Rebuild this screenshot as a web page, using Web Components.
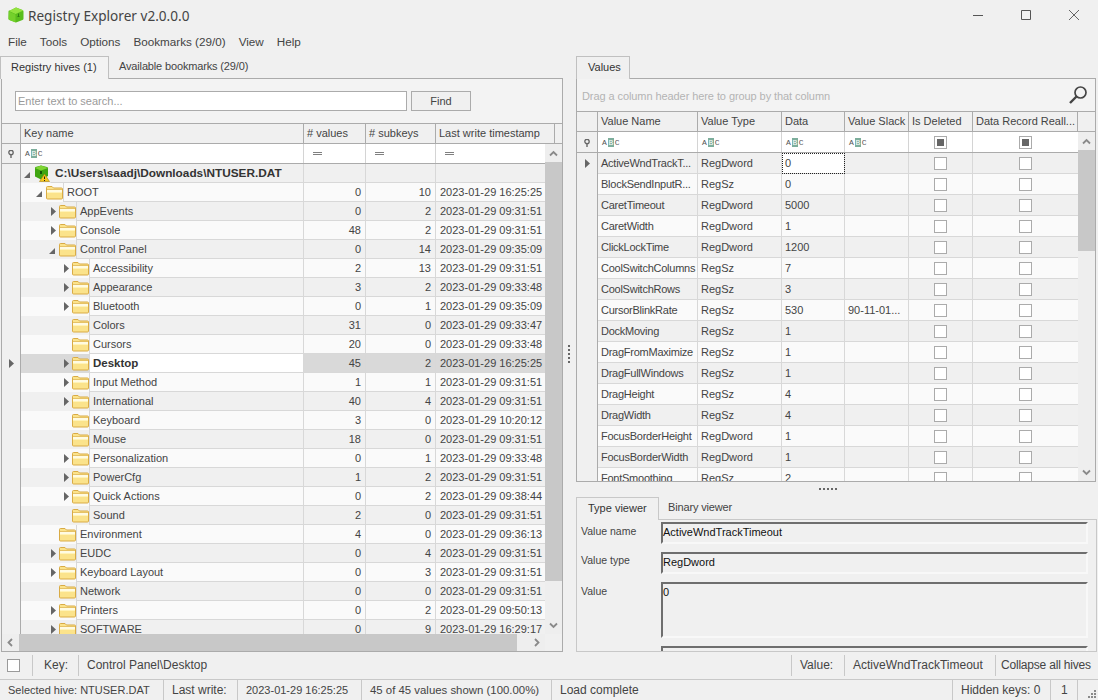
<!DOCTYPE html>
<html>
<head>
<meta charset="utf-8">
<title>Registry Explorer v2.0.0.0</title>
<style>
	html, body { margin: 0; padding: 0; background: #f0f0f0; }
	body { font: 11px/1 "Liberation Sans", sans-serif; color: #444; overflow: hidden; }
</style>
</head>
<body>
<reg-app></reg-app>
<script>
const FOLDER = `<svg width="17" height="15" viewBox="0 0 17 15"><path d="M.5 13V2.500q0-1 1-1h4.500l1.500 1.500h8q1 0 1 1V13q0 1-1 1h-14q-1 0-1-1z" fill="#fbe38b" stroke="#d9ab45"/><path d="M1 4.500h15" stroke="#e6c266"/><path d="M1 5.500h15M1 6.500h15" stroke="#fffbe2"/><path d="M1 7.500h15" stroke="#fff3b8"/></svg>`;
const ARROW_R = `<svg width="5" height="9" viewBox="0 0 5 9"><path d="M0 0l5 4.500-5 4.500z" fill="#666"/></svg>`;
const ARROW_D = `<svg width="6" height="6" viewBox="0 0 6 6"><path d="M6 0v6H0z" fill="#666"/></svg>`;
const PIN = `<svg width="6" height="8" viewBox="0 0 6 8"><circle cx="3" cy="2.500" r="2.200" fill="none" stroke="#666" stroke-width="1.300"/><path d="M3 4v4" stroke="#666" stroke-width="1.400"/></svg>`;
const CUBE = `<svg width="16" height="16" viewBox="0 0 16 16"><path d="M2 3.500L8 .5l6.500 2.500q1 .5 1 1.500v7q0 1-1 1.500L8 15.500 1.500 13q-1-.5-1-1.500v-7q0-.6.5-1z" fill="#59bd1c"/><path d="M1 4l6.500 3 8-3.500L8 .5z" fill="#93e23f"/><path d="M1 4.500l6.500 3V15.500L1.500 13q-1-.5-1-1.500z" fill="#74d02b"/><path d="M10.500 6.500v3M9.500 9.500h2" stroke="#2f7f10"/></svg>`;
const HIVE = `<svg width="16" height="17" viewBox="0 0 16 17"><path d="M1.500 2L7 .5 13 2q1 .3 1 1.300V11l-7 3.500-6-3V3q0-.7.5-1z" fill="#3fa512"/><path d="M1 3l6 2.500L14 3 7 .5z" fill="#7fd433"/><path d="M6 6v3h2V6z" fill="#14540a"/><path d="M10.500 9l5 7.500h-10z" fill="#f7c81e" stroke="#a8820e" stroke-width=".6"/><path d="M10.500 11.500v2.500M10.500 15v1" stroke="#222"/></svg>`;

const ABC = `<style>
	.abc { display: inline-flex; align-items: center; height: 9px; font: 8px/9px "Liberation Mono", monospace; color: #555; gap: 0; }
	.abc b { font-weight: normal; background: #7dae9c; color: #fff; width: 6px; margin: 0 1px; text-align: center; }
</style><span class="abc">A<b>B</b>C</span>`;

class RegTabs extends HTMLElement {
	constructor(){
		super();
		this.attachShadow({mode:"open"});
	}
	connectedCallback(){
		const tabs = this.getAttribute("tabs").split("|");
		const w = this.getAttribute("active-width");
		this.shadowRoot.innerHTML = `
			<style>
				:host { display: flex; flex-direction: column; min-height: 0; }
				.strip { display: flex; height: 23px; flex: none; margin-bottom: -1px; position: relative; z-index: 1; }
				.tab { height: 23px; box-sizing: border-box; line-height: 21px; color: #444; }
				.tab.on {
					width: ${w}px;
					padding-left: ${this.getAttribute("tab-pad")||10}px;
					background: var(--tab-bg, #f0f0f0);
					border: 1px solid var(--tab-line, #c0c0c0);
					border-bottom: none;
					color: #333;
				}
				.tab.off { margin-left: ${this.getAttribute("off-gap")||10}px; letter-spacing: -.15px; }
				.body { flex: 1; min-height: 0; display: flex; flex-direction: column; overflow: hidden; box-sizing: border-box; border: 1px solid var(--panel-line, #ababab); margin-left: var(--panel-left, 0); }
			</style>
			<div class="strip">${tabs.map((t,i)=>`<div class="tab ${i?"off":"on"}">${t}</div>`).join("")}</div>
			<div class="body"><slot></slot></div>
		`;
	}
}

class ScrollBar extends HTMLElement {
	constructor(){
		super();
		this.attachShadow({mode:"open"});
	}
	connectedCallback(){
		const v = this.getAttribute("dir")=="v";
		const chev = (d)=>`<svg width="9" height="9" viewBox="0 0 9 9"><path d="${d}" fill="none" stroke="#8a8a8a" stroke-width="1.800"/></svg>`;
		const a = v?chev("M1 6.500l3.500-3.500 3.500 3.500"):chev("M6 1L2.500 4.500 6 8");
		const b = v?chev("M1 2.500l3.500 3.500 3.500-3.500"):chev("M3 1l3.500 3.500L3 8");
		const size = this.getAttribute("thumb");
		const end = this.getAttribute("end")||17;
		this.shadowRoot.innerHTML = `
			<style>
				:host { display: flex; flex: none; background: #eeeeee; ${v?"flex-direction: column; width: 17px;":"flex-direction: row; height: 17px;"} }
				.btn { display: flex; align-items: center; justify-content: center; flex: none; ${v?"height: 18px;":"width: 17px;"} }
				.btn.end { ${v?`height: ${end}px;`:`width: ${end}px;`} }
				.thumb { flex: none; background: #c8c8c8; ${v?`height: ${size}px;`:`width: ${size}px;`} }
				.rest { flex: 1; }
			</style>
			<div class="btn">${a}</div><div class="thumb"></div><div class="rest"></div><div class="btn end">${b}</div>
		`;
	}
}

class GridHead extends HTMLElement {
	constructor(){
		super();
		this.attachShadow({mode:"open"});
	}
	connectedCallback(){
		const cols = this.getAttribute("cols");
		const names = this.getAttribute("names").split("|");
		this.shadowRoot.innerHTML = `
			<style>
				:host { display: grid; grid-template-columns: ${cols}; height: ${this.getAttribute("h")}px; box-sizing: border-box; background: #f0f0f0; border-top: ${this.getAttribute("top")||0}px solid #ababab; border-bottom: 1px solid #ababab; flex: none; }
				div { border-right: 1px solid #ababab; padding-left: 3px; line-height: 19px; white-space: nowrap; overflow: hidden; color: #444; }
				div:last-child { border-right: none; }
			</style>
			<div></div>${names.map(n=>`<div>${n}</div>`).join("")}
		`;
	}
}

class FilterRow extends HTMLElement {
	constructor(){
		super();
		this.attachShadow({mode:"open"});
	}
	connectedCallback(){
		const cols = this.getAttribute("cols");
		const kinds = this.getAttribute("kinds").split(" ");
		const cell = (k)=>{
			if (k=="abc") return `<div class="c">${ABC}</div>`;
			if (k=="eq") return `<div class="c"><i class="eq"></i></div>`;
			return `<div class="c mid"><span class="chk"><u></u></span></div>`;
		};
		this.shadowRoot.innerHTML = `
			<style>
				:host { display: grid; grid-template-columns: ${cols}; height: ${this.getAttribute("h")}px; flex: none; box-sizing: border-box; background: #fff; border-bottom: 1px solid #ababab; }
				.ind { background: #f0f0f0; border-right: 1px solid #ababab; display: flex; align-items: center; justify-content: center; padding-top: 1px; }
				.c { border-right: 1px solid #d4d4d4; display: flex; align-items: center; padding-left: 4px; }
				.c:last-child { border-right: none; }
				.c.mid { justify-content: center; padding-left: 0; }
				.eq { display: block; width: 9px; height: 1px; border-top: 1px solid #808080; border-bottom: 1px solid #808080; margin-left: 5px; }
				.chk { box-sizing: border-box; width: 13px; height: 13px; border: 1px solid #ababab; background: #fff; display: flex; align-items: center; justify-content: center; }
				.chk u { display: block; width: 7px; height: 7px; background: #666; }
			</style>
			<div class="ind">${PIN}</div>${kinds.map(cell).join("")}
		`;
	}
}

const KEY_COLS = "19px 283px 62px 70px 1fr";

class KeyRow extends HTMLElement {
	constructor(){
		super();
		this.attachShadow({mode:"open"});
	}
	connectedCallback(){
		const a = (n)=>this.getAttribute(n)||"";
		const level = +a("level");
		const exp = a("exp");
		const sel = this.hasAttribute("sel");
		const hive = level==0;
		const ind = hive?29:42+13*(level-1);
		const marker = exp=="d"?ARROW_D:exp=="r"?ARROW_R:"";
		this.shadowRoot.innerHTML = `
			<style>
				:host { display: grid; grid-template-columns: ${KEY_COLS}; height: 19px; flex: none; line-height: 18px; color: #444; background: ${a("alt")?"#fafafa":"#f0f0f0"}; }
				.ind { background: #f0f0f0; border-right: 1px solid #ababab; display: flex; align-items: center; justify-content: center; padding-left: 1px; }
				.key { display: flex; min-width: 0; }
				.tree { flex: none; box-sizing: border-box; width: ${ind}px; display: flex; justify-content: flex-end; align-items: center; ${sel?"background: #d9d9d9;":""} }
				.exp { width: ${exp=="d"?10:9}px; display: flex; align-items: center; padding-left: ${exp=="d"?0:1}px; box-sizing: border-box; margin-top: ${exp=="d"?2:0}px; }
				.exp svg, .icon svg { display: block; }
				.icon { width: ${hive?16:17}px; height: ${hive?17:15}px; }
				.name { flex: 1; min-width: 0; box-sizing: border-box; padding-left: ${hive?4:3}px; white-space: nowrap; overflow: hidden; border-left: 1px solid ${hive?"transparent":"#d8d8d8"}; border-bottom: 1px solid #d8d8d8; border-right: 1px solid #d8d8d8; ${sel?"background: #fff;":""} ${sel?"font-weight: 700; font-size: 11.500px; color: #333;":""} ${hive?"font-weight: 700; font-size: 11.800px; color: #333;":""} }
				.num, .time { box-sizing: border-box; border-bottom: 1px solid #d8d8d8; ${sel?"background: #d9d9d9;":""} }
				.num { text-align: right; padding-right: 4px; border-right: 1px solid #d8d8d8; }
				.time { padding-left: 4px; white-space: nowrap; overflow: hidden; }
			</style>
			<div class="ind">${sel?ARROW_R:""}</div>
			<div class="key">
				<div class="tree"><span class="exp">${marker}</span><span class="icon">${hive?HIVE:FOLDER}</span></div>
				<div class="name">${a("name")}</div>
			</div>
			<div class="num">${a("values")}</div>
			<div class="num">${a("subkeys")}</div>
			<div class="time">${a("time")}</div>
		`;
	}
}

const HIVES = [
	[1,"d","ROOT",0,10,"16:25:25"],
	[2,"r","AppEvents",0,2,"09:31:51"],
	[2,"r","Console",48,2,"09:31:51"],
	[2,"d","Control Panel",0,14,"09:35:09"],
	[3,"r","Accessibility",2,13,"09:31:51"],
	[3,"r","Appearance",3,2,"09:33:48"],
	[3,"r","Bluetooth",0,1,"09:35:09"],
	[3,"","Colors",31,0,"09:33:47"],
	[3,"","Cursors",20,0,"09:33:48"],
	[3,"r","Desktop",45,2,"16:25:25"],
	[3,"r","Input Method",1,1,"09:31:51"],
	[3,"r","International",40,4,"09:31:51"],
	[3,"","Keyboard",3,0,"10:20:12"],
	[3,"","Mouse",18,0,"09:31:51"],
	[3,"r","Personalization",0,1,"09:33:48"],
	[3,"r","PowerCfg",1,2,"09:31:51"],
	[3,"r","Quick Actions",0,2,"09:38:44"],
	[3,"","Sound",2,0,"09:31:51"],
	[2,"","Environment",4,0,"09:36:13"],
	[2,"r","EUDC",0,4,"09:31:51"],
	[2,"r","Keyboard Layout",0,3,"09:31:51"],
	[2,"","Network",0,0,"09:31:51"],
	[2,"r","Printers",0,2,"09:50:13"],
	[2,"r","SOFTWARE",0,9,"16:29:17"],
];

class HivePanel extends HTMLElement {
	constructor(){
		super();
		this.attachShadow({mode:"open"});
		const rows = HIVES.map((r,i)=>`<key-row level="${r[0]}" exp="${r[1]}" name="${r[2]}" values="${r[3]}" subkeys="${r[4]}" time="2023-01-29 ${r[5]}" ${i%2==0?'alt="1"':""} ${r[2]=="Desktop"?"sel":""}></key-row>`).join("");
		this.shadowRoot.innerHTML = `
			<style>
				:host { display: flex; flex-direction: column; flex: 1; min-height: 0; background: #f3f3f3; }
				.search { display: flex; gap: 4px; padding: 12px 0 0 13px; height: 32px; flex: none; }
				.input { box-sizing: border-box; width: 392px; height: 20px; background: #fff; border: 1px solid #ababab; padding-left: 2px; line-height: 18px; color: #9a9a9a; }
				.find { box-sizing: border-box; width: 60px; height: 20px; background: #f0f0f0; border: 1px solid #ababab; text-align: center; line-height: 18px; color: #444; }
				.mid { display: flex; flex: 1; min-height: 0; }
				.cells { flex: 1; min-width: 0; display: flex; flex-direction: column; overflow: hidden; }
				.bottom { display: flex; flex: none; height: 17px; background: #f0f0f0; }
				.bottom scroll-bar { flex: 1; }
				.corner { width: 17px; }
			</style>
			<div class="search"><div class="input">Enter text to search...</div><div class="find">Find</div></div>
			<grid-head h="21" top="1" cols="19px 283px 62px 70px 119px 1fr" names="Key name|# values|# subkeys|Last write timestamp|"></grid-head>
			<div class="mid">
				<div class="cells">
					<filter-row h="20" cols="${KEY_COLS}" kinds="abc eq eq eq"></filter-row>
					<key-row level="0" exp="d" name="C:\\Users\\saadj\\Downloads\\NTUSER.DAT"></key-row>
					${rows}
				</div>
				<scroll-bar dir="v" thumb="419"></scroll-bar>
			</div>
			<div class="bottom"><scroll-bar dir="h" thumb="498"></scroll-bar><div class="corner"></div></div>
		`;
	}
}

const VAL_COLS = "21px 100px 84px 63px 64px 64px 1fr";

class ValueRow extends HTMLElement {
	constructor(){
		super();
		this.attachShadow({mode:"open"});
	}
	connectedCallback(){
		const a = (n)=>this.getAttribute(n)||"";
		const first = this.hasAttribute("first");
		this.shadowRoot.innerHTML = `
			<style>
				:host { display: grid; grid-template-columns: ${VAL_COLS}; height: 21px; flex: none; line-height: 20px; color: #444; background: ${a("alt")?"#fafafa":"#f0f0f0"}; }
				.ind { background: #f0f0f0; border-right: 1px solid #ababab; display: flex; align-items: center; justify-content: center; }
				.c { box-sizing: border-box; border-right: 1px solid #d8d8d8; border-bottom: 1px solid #d8d8d8; padding-left: 3px; white-space: nowrap; overflow: hidden; }
				.c:last-child { border-right: none; }
				.vn { letter-spacing: -.25px; }
				.focus { background: #fff; outline: 1px dotted #222; outline-offset: -1px; }
				.mid { padding: 0; display: flex; align-items: center; justify-content: center; }
				.chk { box-sizing: border-box; width: 13px; height: 13px; border: 1px solid #ababab; background: #fff; }
			</style>
			<div class="ind">${first?ARROW_R:""}</div>
			<div class="c vn">${a("name")}</div>
			<div class="c">${a("type")}</div>
			<div class="c ${first?"focus":""}">${a("data")}</div>
			<div class="c">${a("slack")}</div>
			<div class="c mid"><span class="chk"></span></div>
			<div class="c mid"><span class="chk"></span></div>
		`;
	}
}

const VALUES = [
	["ActiveWndTrackT...","RegDword","0",""],
	["BlockSendInputR...","RegSz","0",""],
	["CaretTimeout","RegDword","5000",""],
	["CaretWidth","RegDword","1",""],
	["ClickLockTime","RegDword","1200",""],
	["CoolSwitchColumns","RegSz","7",""],
	["CoolSwitchRows","RegSz","3",""],
	["CursorBlinkRate","RegSz","530","90-11-01..."],
	["DockMoving","RegSz","1",""],
	["DragFromMaximize","RegSz","1",""],
	["DragFullWindows","RegSz","1",""],
	["DragHeight","RegSz","4",""],
	["DragWidth","RegSz","4",""],
	["FocusBorderHeight","RegDword","1",""],
	["FocusBorderWidth","RegDword","1",""],
	["FontSmoothing","RegSz","2",""],
];

class ValuesPanel extends HTMLElement {
	constructor(){
		super();
		this.attachShadow({mode:"open"});
		const rows = VALUES.map((r,i)=>`<value-row name="${r[0]}" type="${r[1]}" data="${r[2]}" slack="${r[3]}" ${i%2?'alt="1"':""} ${i==0?"first":""}></value-row>`).join("");
		this.shadowRoot.innerHTML = `
			<style>
				:host { display: flex; flex-direction: column; flex: 1; min-height: 0; background: #f3f3f3; }
				.group { display: flex; align-items: center; justify-content: space-between; flex: none; height: 33px; box-sizing: border-box; padding: 3px 7px 0 5px; border-bottom: 1px solid #ababab; color: #b4b4b4; }
				.group span { letter-spacing: -.08px; }
				.group svg { display: block; margin-top: -4px; }
				.mid { display: flex; flex: 1; min-height: 0; }
				.cells { flex: 1; min-width: 0; display: flex; flex-direction: column; overflow: hidden; }
			</style>
			<div class="group"><span>Drag a column header here to group by that column</span>
				<svg width="20" height="20" viewBox="0 0 20 20"><circle cx="12.500" cy="7.500" r="5.500" fill="none" stroke="#444" stroke-width="1.700"/><path d="M8.500 11.500L2 18" stroke="#444" stroke-width="2.400"/></svg>
			</div>
			<grid-head h="20" cols="21px 100px 84px 63px 64px 64px 105px 1fr" names="Value Name|Value Type|Data|Value Slack|Is Deleted|Data Record Reall...|"></grid-head>
			<div class="mid">
				<div class="cells">
					<filter-row h="21" cols="${VAL_COLS}" kinds="abc abc abc abc chk chk"></filter-row>
					${rows}
				</div>
				<scroll-bar dir="v" thumb="101"></scroll-bar>
			</div>
		`;
	}
}

class FieldBox extends HTMLElement {
	constructor(){
		super();
		this.attachShadow({mode:"open"});
	}
	connectedCallback(){
		this.shadowRoot.innerHTML = `
			<style>
				:host { display: grid; grid-template-columns: 84px 427px; flex: none; height: ${this.getAttribute("h")}px; }
				.label { padding: ${this.getAttribute("pad")||3}px 0 0 4px; color: #444; line-height: 13px; font-size: 10.500px; }
				.box { box-sizing: border-box; background: #f0f0f0; border: 2px solid; border-color: #6e6e6e #f8f8f8 #f8f8f8 #6e6e6e; padding: 1px 0 0 0; color: #111; line-height: 14px; }
			</style>
			<div class="label">${this.getAttribute("label")||""}</div>
			<div class="box"><slot></slot></div>
		`;
	}
}

class ViewerPanel extends HTMLElement {
	constructor(){
		super();
		this.attachShadow({mode:"open"});
		this.shadowRoot.innerHTML = `
			<style>
				:host { display: flex; flex-direction: column; gap: 8px; flex: 1; min-height: 0; padding-top: 2px; background: #f0f0f0; }
			</style>
			<field-box h="22" label="Value name" pad="3">ActiveWndTrackTimeout</field-box>
			<field-box h="22" label="Value type" pad="2">RegDword</field-box>
			<field-box h="56" label="Value" pad="3">0</field-box>
			<field-box h="22"></field-box>
		`;
	}
}

class BarCells extends HTMLElement {
	constructor(){
		super();
		this.attachShadow({mode:"open"});
	}
	connectedCallback(){
		this.shadowRoot.innerHTML = `
			<style>
				:host { display: flex; flex: none; height: 20px; background: #f0f0f0; line-height: 20px; font-size: 12px; color: #444; }
				::slotted(span) { box-sizing: border-box; padding-left: 8px; white-space: nowrap; border-right: 1px solid #c8c8c8; }
				::slotted(span.grow) { flex: 1; }
				::slotted(span.small) { font-size: 11px; }
				::slotted(span.mid) { font-size: 11.400px; }
			</style>
			<slot></slot>
		`;
	}
}

class RegApp extends HTMLElement {
	constructor(){
		super();
		this.attachShadow({mode:"open"});
		const dots = (n,c)=>`<span class="dots ${c}">${"<i></i>".repeat(n)}</span>`;
		const sep = `<b class="sep"></b>`;
		this.shadowRoot.innerHTML = `
			<style>
				:host { display: flex; flex-direction: column; width: 1098px; height: 700px; background: #f0f0f0; overflow: hidden; }
				.title { display: flex; align-items: center; height: 30px; flex: none; padding-left: 8px; }
				.title svg { display: block; }
				.title .name { margin-left: 4px; font: 13.600px "Noto Sans", sans-serif; color: #444; flex: 1; margin-top: 1px; }
				.win { width: 48px; height: 30px; display: flex; align-items: center; justify-content: center; }
				.menu { display: flex; gap: 13px; height: 26px; flex: none; padding: 0 0 3px 8px; align-items: center; font-size: 11.700px; color: #444; box-sizing: border-box; }
				.main { display: flex; flex: none; height: 596px; }
				.left { width: 564px; flex: none; display: flex; flex-direction: column; }
				.left reg-tabs { flex: 1; --panel-left: 1px; margin-right: 1px; --tab-bg: #f3f3f3; }
				.vsplit { width: 12px; flex: none; display: flex; align-items: center; justify-content: center; padding-right: 2px; box-sizing: border-box; }
				.right { flex: 1; min-width: 0; display: flex; flex-direction: column; }
				.right .top { height: 426px; flex: none; margin-right: 2px; --tab-bg: #f0f0f0; }
				.hsplit { height: 15px; flex: none; display: flex; justify-content: center; padding: 6px 18px 0 0; box-sizing: border-box; }
				.right .low { flex: 1; min-height: 0; margin-right: 1px; --panel-line: #c8c8c8; --tab-line: #c8c8c8; }
				.dots { display: flex; gap: 2px; }
				.dots.v { flex-direction: column; }
				.dots i { display: block; width: 2px; height: 2px; background: #666; }
				.keybar { display: flex; align-items: center; height: 28px; flex: none; box-sizing: border-box; border-bottom: 1px solid #c8c8c8; font-size: 12px; color: #444; padding-bottom: 1px; }
				.check { box-sizing: border-box; width: 13px; height: 13px; background: #fff; border: 1px solid #9a9a9a; margin: 0 12px 0 7px; flex: none; }
				.sep { display: block; width: 1px; height: 21px; background: #c8c8c8; flex: none; }
				.t { box-sizing: border-box; padding-left: 8px; white-space: nowrap; flex: none; }
				.fill { flex: 1; }
			</style>
			<div class="title">${CUBE}<span class="name">Registry Explorer v2.0.0.0</span>
				<span class="win"><svg width="10" height="10" viewBox="0 0 10 10"><path d="M0 5.500h10" stroke="#555"/></svg></span>
				<span class="win"><svg width="10" height="10" viewBox="0 0 10 10"><path d="M.5.500h9v9h-9z" fill="none" stroke="#555"/></svg></span>
				<span class="win"><svg width="10" height="10" viewBox="0 0 10 10"><path d="M0 0l10 10M10 0L0 10" stroke="#555" stroke-width=".9"/></svg></span>
			</div>
			<div class="menu"><span>File</span><span>Tools</span><span>Options</span><span>Bookmarks (29/0)</span><span>View</span><span>Help</span></div>
			<div class="main">
				<div class="left">
					<reg-tabs tabs="Registry hives (1)|Available bookmarks (29/0)" active-width="109"><hive-panel></hive-panel></reg-tabs>
				</div>
				<div class="vsplit">${dots(5,"v")}</div>
				<div class="right">
					<reg-tabs class="top" tabs="Values" active-width="54" tab-pad="11"><values-panel></values-panel></reg-tabs>
					<div class="hsplit">${dots(5,"h")}</div>
					<reg-tabs class="low" tabs="Type viewer|Binary viewer" active-width="83" tab-pad="11" off-gap="9"><viewer-panel></viewer-panel></reg-tabs>
				</div>
			</div>
			<div class="keybar">
				<span class="check"></span>${sep}
				<span class="t" style="width:45px;padding-left:11px">Key:</span>${sep}
				<span class="t">Control Panel\\Desktop</span>
				<span class="fill"></span>${sep}
				<span class="t" style="width:52px">Value:</span>${sep}
				<span class="t" style="width:150px">ActiveWndTrackTimeout</span>${sep}
				<span class="t" style="padding-left:5px;width:102px;letter-spacing:-.2px">Collapse all hives</span>
			</div>
			<bar-cells>
				<span class="small" style="width:164px">Selected hive: NTUSER.DAT</span>
				<span style="width:74px">Last write:</span>
				<span class="small" style="width:124px">2023-01-29 16:25:25</span>
				<span class="mid" style="width:190px">45 of 45 values shown (100.00%)</span>
				<span class="grow">Load complete</span>
				<span style="width:98px">Hidden keys: 0</span>
				<span style="width:27px;padding-left:10px">1</span>
				<span style="width:20px;border:none;padding:0"><svg width="10" height="10" viewBox="0 0 10 10" style="display:block;margin:9px 0 0 9px"><path d="M7 1h2v2H7zM4 4h2v2H4zM7 4h2v2H7zM1 7h2v2H1zM4 7h2v2H4zM7 7h2v2H7z" fill="#8a8a8a"/></svg></span>
			</bar-cells>
		`;
	}
}

customElements.define("reg-tabs",RegTabs);
customElements.define("scroll-bar",ScrollBar);
customElements.define("grid-head",GridHead);
customElements.define("filter-row",FilterRow);
customElements.define("key-row",KeyRow);
customElements.define("value-row",ValueRow);
customElements.define("hive-panel",HivePanel);
customElements.define("values-panel",ValuesPanel);
customElements.define("field-box",FieldBox);
customElements.define("viewer-panel",ViewerPanel);
customElements.define("bar-cells",BarCells);
customElements.define("reg-app",RegApp);
</script>
</body>
</html>
